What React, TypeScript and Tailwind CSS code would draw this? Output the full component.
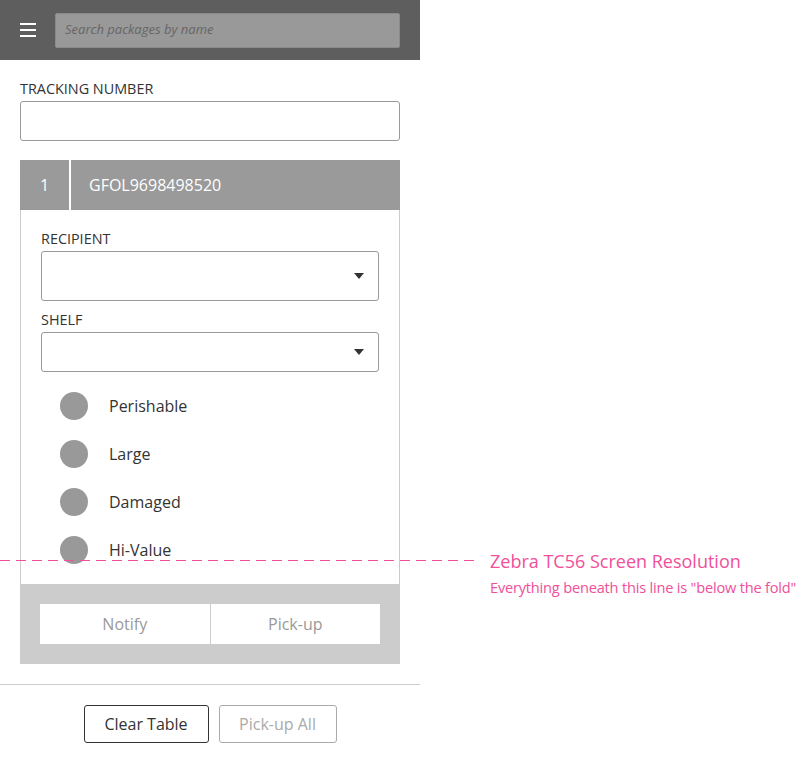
export default function App() {
  const flags = ["Perishable", "Large", "Damaged", "Hi-Value"];
  return (
    <div
      className="relative h-[764px] w-[807px] overflow-hidden bg-white text-[#333]"
      style={{ fontFamily: '"Open Sans", "Noto Sans", sans-serif' }}
    >
      <div className="w-[420px]">
        {/* Top bar */}
        <div className="flex h-[60px] items-center bg-[#5e5e5e] pl-5 pr-5">
          <div className="flex w-4 flex-col gap-1 py-[1px]">
            <span className="block h-[2px] w-4 bg-white" />
            <span className="block h-[2px] w-4 bg-white" />
            <span className="block h-[2px] w-4 bg-white" />
          </div>
          <div className="ml-[19px] flex h-[35px] flex-1 items-center rounded-[2px] border border-[#8a8a8a] bg-[#999] px-[9px]">
            <span className="text-[13px] italic text-[#666]">Search packages by name</span>
          </div>
        </div>

        {/* Tracking number */}
        <div className="px-5 pt-[20px]">
          <div className="text-[14.4px] leading-[18px] text-[#333]">TRACKING NUMBER</div>
          <div className="mt-[3px] h-[40px] rounded-[3px] border border-[#999]" />
        </div>

        {/* Package card */}
        <div className="mx-5 mt-[19px]">
          <div className="flex h-[50px] items-center bg-[#9a9a9a] text-[16px] text-white">
            <div className="flex h-full w-[51px] items-center border-r-2 border-white pl-5">1</div>
            <div className="pl-[18px]">GFOL9698498520</div>
          </div>
          <div className="border-x border-[#ccc] px-5 pt-[20px] pb-[10px]">
            <div className="text-[14.4px] leading-[18px]">RECIPIENT</div>
            <div className="mt-[3px] flex h-[50px] items-center justify-end rounded-[3px] border border-[#999] pr-[14px]">
              <Caret />
            </div>
            <div className="mt-[10px] text-[14.4px] leading-[18px]">SHELF</div>
            <div className="mt-[3px] flex h-[40px] items-center justify-end rounded-[3px] border border-[#999] pr-[14px]">
              <Caret />
            </div>
            <div className="mt-[10px]">
              {flags.map((f) => (
                <div key={f} className="flex h-[48px] items-center pl-[19px]">
                  <span className="block h-[28px] w-[28px] rounded-full bg-[#999]" />
                  <span className="ml-[21px] text-[16px] text-[#333]">{f}</span>
                </div>
              ))}
            </div>
          </div>
          <div className="bg-[#ccc] px-5 py-5">
            <div className="flex h-[40px] bg-white text-[16px] text-[#999]">
              <div className="flex flex-1 items-center justify-center border-r border-[#ccc]">Notify</div>
              <div className="flex flex-1 items-center justify-center">Pick-up</div>
            </div>
          </div>
        </div>

        <div className="mt-[20px] h-px bg-[#ccc]" />

        <div className="mt-[20px] flex justify-center gap-[10px]">
          <button className="h-[38px] w-[125px] rounded-[3px] border border-[#333] text-[16px] text-[#333]">
            Clear Table
          </button>
          <button className="h-[38px] w-[118px] rounded-[3px] border border-[#aaa] text-[16px] text-[#aaa]">
            Pick-up All
          </button>
        </div>
      </div>

      {/* Fold marker */}
      <div className="absolute left-0 top-[560px] h-px w-[477px] bg-[repeating-linear-gradient(90deg,#f0509a_0px,#f0509a_10px,transparent_10px,transparent_16px)]" />
      <div className="absolute left-[490px] top-[548px] whitespace-nowrap text-[#f0509a]">
        <div className="text-[18px] leading-[26px]">Zebra TC56 Screen Resolution</div>
        <div className="mt-[3px] text-[14.6px] leading-[20px] tracking-[-0.2px]">Everything beneath this line is "below the fold"</div>
      </div>
    </div>
  );
}

function Caret() {
  return (
    <svg width="10" height="6" viewBox="0 0 10 6">
      <path d="M0 0 L10 0 L5 6 Z" fill="#333" />
    </svg>
  );
}
